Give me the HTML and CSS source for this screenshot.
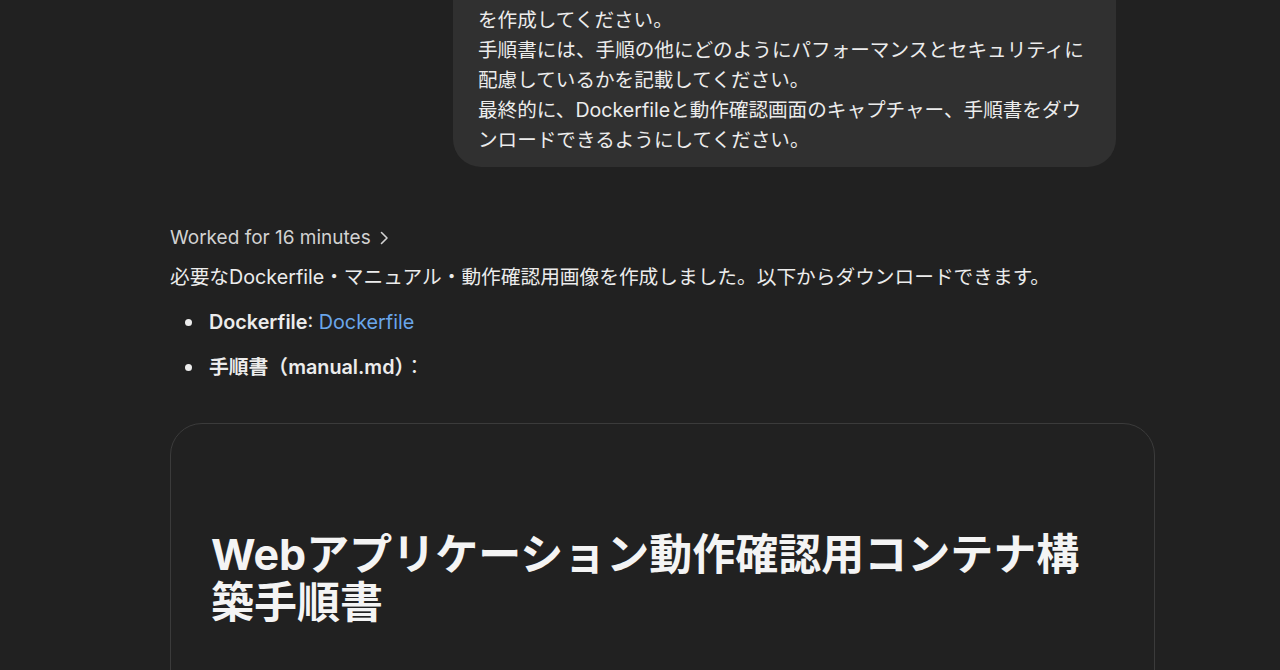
FILE: index.html
```html
<!DOCTYPE html>
<html lang="ja">
<head>
<meta charset="utf-8">
<title>Chat</title>
<link rel="stylesheet" href="styles.css">
</head>
<body>
<main class="thread">
  <div class="user-row">
    <div class="bubble">
      <p>コンテナ構築手順とアプリケーションの動作確認方法を記した手順書を作成してください。</p>
      <p>手順書には、手順の他にどのようにパフォーマンスとセキュリティに配慮しているかを記載してください。</p>
      <p>最終的に、Dockerfileと動作確認画面のキャプチャー、手順書をダウンロードできるようにしてください。</p>
    </div>
  </div>

  <section class="assistant">
    <div class="worked">Worked for 16 minutes
      <svg class="chev" width="10" height="14" viewBox="0 0 10 14"><path d="M2.5 1.5 L8 7 L2.5 12.5" fill="none" stroke="currentColor" stroke-width="1.6" stroke-linecap="round" stroke-linejoin="round"/></svg>
    </div>
    <p class="answer">必要なDockerfile・マニュアル・動作確認用画像を作成しました。以下からダウンロードできます。</p>
    <ul class="files">
      <li><span><strong>Dockerfile</strong>: <a href="#">Dockerfile</a></span></li>
      <li><span><strong>手順書（manual.md）</strong>：</span></li>
    </ul>
    <div class="doc-card">
      <h1>Webアプリケーション動作確認用コンテナ構築手順書</h1>
    </div>
  </section>
</main>
</body>
</html>
```

FILE: styles.css
```css
html, body {
  margin: 0;
  padding: 0;
  background: #212121;
  height: 100%;
  overflow: hidden;
}

body {
  font-family: Inter, "Noto Sans CJK JP", sans-serif;
  color: #ececec;
}

.thread {
  margin-left: 170px;
  width: 985px;
  display: flex;
  flex-direction: column;
}

.user-row {
  display: flex;
  justify-content: flex-end;
  padding-right: 39px;
  margin-top: -37px;
}

.bubble {
  width: 663px;
  box-sizing: border-box;
  background: #303030;
  border-radius: 28px;
  padding: 12px 25px 12px 25px;
  font-size: 19.6px;
  line-height: 30px;
  color: #ececec;
}

.bubble p {
  margin: 0;
}

.assistant {
  display: flex;
  flex-direction: column;
}

.worked {
  margin-top: 57px;
  font-size: 19px;
  line-height: 28px;
  color: #d2d2d2;
  display: flex;
  align-items: center;
  gap: 8px;
}

.chev {
  display: block;
}

.answer {
  margin: 11px 0 0 0;
  font-size: 19.7px;
  line-height: 28px;
}

.files {
  list-style: none;
  margin: 17px 0 0 0;
  padding: 0;
  font-size: 19.8px;
  line-height: 28px;
}

.files li {
  display: flex;
  align-items: center;
  margin-bottom: 17px;
}

.files li::before {
  content: "";
  width: 7px;
  height: 7px;
  border-radius: 50%;
  background: #ececec;
  margin: 1px 17px 0 15px;
  flex: none;
}

.files strong {
  font-weight: 600;
}

.files a {
  color: #6aa6ea;
  text-decoration: none;
}

.doc-card {
  margin-top: 25px;
  border: 1px solid #3b3b3b;
  border-radius: 32px;
  padding: 106px 40px 60px 40px;
  min-height: 400px;
}

.doc-card h1 {
  margin: 0;
  font-size: 43px;
  line-height: 48px;
  font-weight: 700;
  color: #f4f4f4;
}
```
